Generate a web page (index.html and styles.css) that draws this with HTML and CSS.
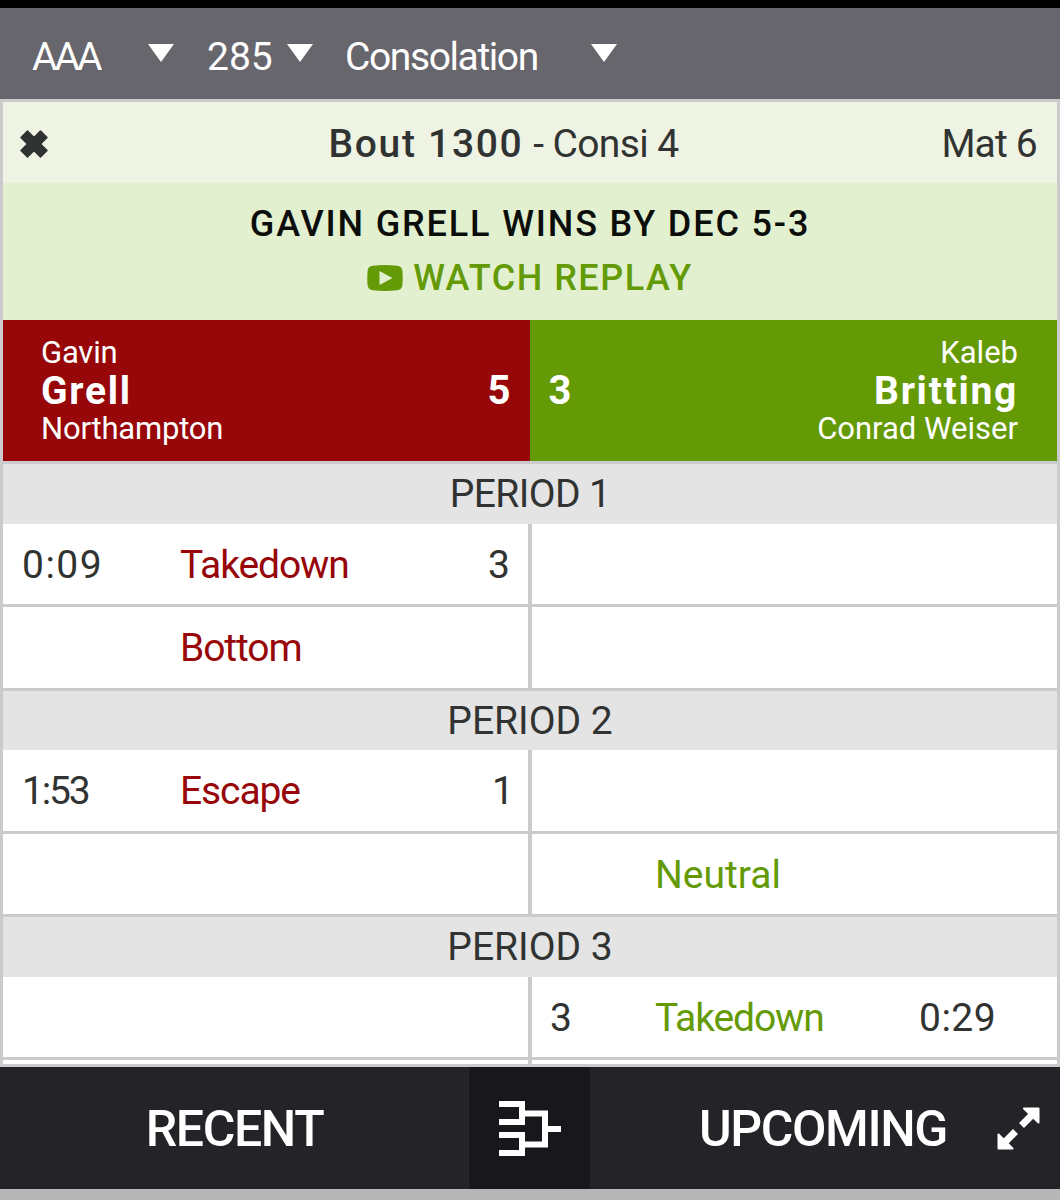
FILE: index.html
```html
<!DOCTYPE html>
<html lang="en">
<head>
    <meta charset="UTF-8">
    <meta name="viewport" content="width=device-width, initial-scale=1.0">
    <title>Bout 1300</title>
    <link rel="stylesheet" href="styles.css">
</head>
<body>
    <header class="filters">
        <div class="filter filter-class"><span>AAA</span><i class="caret"></i></div>
        <div class="filter filter-weight"><span>285</span><i class="caret"></i></div>
        <div class="filter filter-round"><span>Consolation</span><i class="caret"></i></div>
    </header>

    <main class="bout">
        <div class="bout-header">
            <svg class="close" viewBox="0 0 28 28"><path d="M6.5 6.5L21.5 21.5M21.5 6.5L6.5 21.5"/><path class="tips" d="M1 7.5L7.5 1L14 7.5L20.5 1L27 7.5L20.5 14L27 20.5L20.5 27L14 20.5L7.5 27L1 20.5L7.5 14Z"/></svg>
            <h1><b>Bout 1300</b> <span>- Consi 4</span></h1>
            <span class="mat">Mat 6</span>
        </div>

        <div class="result">
            <p class="result-text">GAVIN GRELL WINS BY DEC 5-3</p>
            <a class="replay" href="#">
                <svg viewBox="0 0 36 26"><path fill-rule="evenodd" d="M6 .7Q18-.5 30 .7Q35 1 35.4 6Q36 13 35.4 20Q35 25 30 25.3Q18 26.5 6 25.3Q1 25 .6 20Q0 13 .6 6Q1 1 6 .7ZM12.5 6V20L25.5 13Z"/></svg>
                <span>WATCH REPLAY</span>
            </a>
        </div>

        <div class="wrestlers">
            <div class="wrestler red">
                <div class="name">
                    <span class="first">Gavin</span>
                    <strong>Grell</strong>
                    <span class="school">Northampton</span>
                </div>
                <div class="total">5</div>
            </div>
            <div class="wrestler green">
                <div class="total">3</div>
                <div class="name">
                    <span class="first">Kaleb</span>
                    <strong>Britting</strong>
                    <span class="school">Conrad Weiser</span>
                </div>
            </div>
        </div>

        <h2 class="period first-period">PERIOD 1</h2>
        <div class="row">
            <div class="cell left"><span class="time">0:09</span><span class="move">Takedown</span><span class="pts">3</span></div>
            <div class="cell right"></div>
        </div>
        <div class="row">
            <div class="cell left"><span class="time"></span><span class="move">Bottom</span></div>
            <div class="cell right"></div>
        </div>

        <h2 class="period">PERIOD 2</h2>
        <div class="row">
            <div class="cell left"><span class="time narrow">1:53</span><span class="move">Escape</span><span class="pts one">1</span></div>
            <div class="cell right"></div>
        </div>
        <div class="row">
            <div class="cell left"></div>
            <div class="cell right"><span class="pts"></span><span class="move neutral">Neutral</span></div>
        </div>

        <h2 class="period">PERIOD 3</h2>
        <div class="row">
            <div class="cell left"></div>
            <div class="cell right"><span class="pts">3</span><span class="move">Takedown</span><span class="time">0:29</span></div>
        </div>
        <div class="row">
            <div class="cell left"></div>
            <div class="cell right"></div>
        </div>
    </main>

    <footer class="tabs">
        <a class="tab recent" href="#"><span>RECENT</span></a>
        <a class="tab bracket" href="#">
            <svg viewBox="0 0 62 55"><path d="M0 3H23V21H0M0 34H23V52H0M23 12.5H46V43.5H23M46 28H62"/></svg>
        </a>
        <a class="tab upcoming" href="#">
            <span>UPCOMING</span>
            <svg viewBox="0 0 43 43"><path class="head" d="M27 1.5H41.5V15.5ZM1.5 27.5V41.5H15.5Z"/><path class="shaft" d="M24.5 18.5L36 7M18.5 24.5L7 36"/></svg>
        </a>
    </footer>
</body>
</html>
```
FILE: styles.css
```css
* {
    margin: 0;
    padding: 0;
    box-sizing: border-box;
}

body {
    height: 1200px;
    overflow: hidden;
    display: flex;
    flex-direction: column;
    font-family: Roboto, 'Liberation Sans', sans-serif;
    font-size: 39px;
    color: #303331;
    background-color: #b7b7b7;
}

a {
    text-decoration: none;
}

.filters {
    height: 99px;
    flex: none;
    display: flex;
    align-items: center;
    padding: 6px 0 0 32px;
    color: white;
    background-color: #67666c;
    border-top: 8px solid black;
}

.filter {
    display: flex;
    align-items: center;
    justify-content: space-between;
    white-space: nowrap;
}

.filter-class {
    width: 142px;
    margin-right: 33px;
    letter-spacing: -3px;
}

.filter-weight {
    width: 106px;
    margin-right: 32px;
}

.filter-round {
    width: 272px;
    letter-spacing: -1.4px;
}

.caret {
    border-left: 13px solid transparent;
    border-right: 13px solid transparent;
    border-top: 18px solid white;
    margin-bottom: 7px;
}

.bout {
    height: 968px;
    flex: none;
    overflow: hidden;
    border: 3px solid #cbcbcb;
}

.bout-header {
    height: 81px;
    display: grid;
    grid-template-columns: 150px 1fr 200px;
    align-items: center;
    padding: 2px 20px 0 17px;
    background-color: #eff3e4;
}

.close {
    width: 28px;
    height: 28px;
    fill: none;
    stroke: #303331;
    stroke-width: 9;
}

.close .tips {
    fill: #303331;
    stroke-width: 1.5;
    stroke-linejoin: round;
}

h1 {
    font-size: 39px;
    font-weight: 400;
    text-align: center;
    white-space: nowrap;
}

h1 b {
    font-weight: 500;
    letter-spacing: 1.7px;
}

h1 span {
    letter-spacing: -0.6px;
}

.mat {
    text-align: right;
    letter-spacing: -0.8px;
}

.result {
    height: 137px;
    padding-top: 14px;
    text-align: center;
    font-size: 36px;
    font-weight: 500;
    line-height: 54px;
    background-color: #e2f0cf;
}

.result-text {
    color: #0b0d0b;
    letter-spacing: 1.85px;
}

.replay {
    display: flex;
    align-items: center;
    justify-content: center;
    gap: 10px;
    color: #639a06;
    letter-spacing: 1.5px;
}

.replay svg {
    width: 36px;
    height: 26px;
    fill: #639a06;
}

.wrestlers {
    display: flex;
    height: 144px;
    border-bottom: 3px solid #cbcbcb;
}

.wrestler {
    flex: 1;
    display: flex;
    align-items: center;
    justify-content: space-between;
    color: white;
}

.red {
    padding: 0 19px 0 38px;
    background-color: #970608;
}

.green {
    padding: 0 39px 0 19px;
    text-align: right;
    background-color: #639a06;
}

.name {
    display: flex;
    flex-direction: column;
    font-size: 31px;
    line-height: 38px;
}

.red .name {
    letter-spacing: -0.2px;
}

.name strong {
    font-size: 39px;
    font-weight: 700;
    letter-spacing: 1.7px;
}

.total {
    font-size: 40px;
    font-weight: 700;
}

.period {
    height: 59.5px;
    line-height: 60px;
    font-size: 39px;
    font-weight: 400;
    text-align: center;
    background-color: #e4e4e4;
}

.first-period {
    letter-spacing: -0.6px;
}

.row {
    display: flex;
    height: 83.5px;
    background-color: white;
    border-bottom: 3px solid #cbcbcb;
}

.cell {
    display: flex;
    align-items: center;
    padding-top: 2px;
}

.left {
    width: 529px;
    padding-left: 19px;
    padding-right: 18px;
    border-right: 4px solid #cbcbcb;
}

.right {
    width: 525px;
    padding-left: 18px;
}

.left .time {
    width: 158px;
    letter-spacing: 1.5px;
}

.left .narrow {
    letter-spacing: -2.2px;
}

.move {
    letter-spacing: -1.1px;
}

.left .move {
    color: #970608;
}

.left .pts {
    margin-left: auto;
}

.left .one {
    margin-right: -4px;
}

.right .pts {
    width: 105px;
}

.right .move {
    width: 264px;
    color: #639a06;
}

.right .neutral {
    letter-spacing: 0;
}

.right .time {
    letter-spacing: 0.5px;
}

.tabs {
    display: flex;
    height: 122px;
    flex: none;
    background-color: #242328;
}

.tab {
    display: flex;
    align-items: center;
    justify-content: center;
    color: white;
    font-size: 50px;
    font-weight: 500;
    letter-spacing: -1.4px;
}

.tab span {
    padding-top: 2px;
}

.recent {
    width: 469px;
}

.bracket {
    width: 121px;
    background-color: #18171b;
}

.bracket svg {
    width: 62px;
    height: 55px;
    fill: none;
    stroke: white;
    stroke-width: 6;
}

.upcoming {
    flex: 1;
    justify-content: space-between;
    padding: 0 20px 0 109px;
}

.upcoming svg {
    width: 43px;
    height: 43px;
}

.head {
    fill: white;
    stroke: white;
    stroke-width: 2;
    stroke-linejoin: round;
}

.shaft {
    stroke: white;
    stroke-width: 7;
}
```
